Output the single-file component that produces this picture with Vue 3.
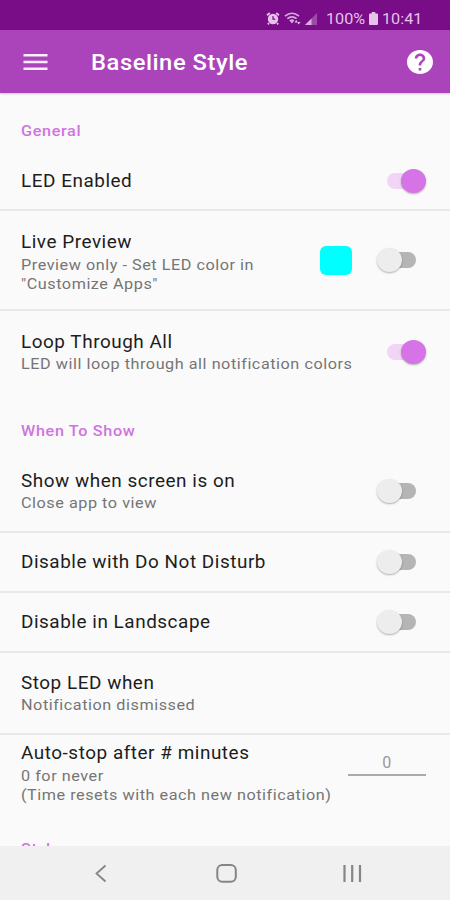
<script setup>
const general = [
  { title: 'LED Enabled', on: true, size: 'short first' },
  { title: 'Live Preview', lines: ['Preview only - Set LED color in', '"Customize Apps"'], on: false, swatch: true, size: 'tall' },
  { title: 'Loop Through All', lines: ['LED will loop through all notification colors'], on: true, size: 'medium last' },
]
const whenToShow = [
  { title: 'Show when screen is on', lines: ['Close app to view'], on: false, size: 'medium' },
  { title: 'Disable with Do Not Disturb', on: false, size: 'short' },
  { title: 'Disable in Landscape', on: false, size: 'short' },
  { title: 'Stop LED when', lines: ['Notification dismissed'], size: 'medium' },
  { title: 'Auto-stop after # minutes', lines: ['0 for never', '(Time resets with each new notification)'], input: '0', size: 'compact last' },
]
const sections = [
  { name: 'General', rows: general },
  { name: 'When To Show', rows: whenToShow },
  { name: 'Style', rows: [] },
]
</script>

<template>
  <div class="screen">
    <div class="status">
      <svg class="alarm" width="14" height="13" viewBox="0 0 14 13">
        <path d="M1 3.2 3.8 1M13 3.2 10.2 1M3 11.2 1.8 12.4M11 11.2l1.2 1.2" stroke="#e6c3ea" stroke-width="1.8" fill="none" />
        <circle cx="7" cy="7" r="5.2" fill="#e6c3ea" />
        <path d="M7 4v3.2h2.3" stroke="#780d87" stroke-width="1.2" fill="none" />
      </svg>
      <svg class="wifi" width="17" height="13" viewBox="0 0 17 13">
        <path d="M1 4.1Q8 -1.5 15 4.1M3.3 6.7Q8 3 12.6 6.7" stroke="#d9addf" stroke-width="1.6" fill="none" />
        <path d="M5.3 8.3Q8 6.2 10.4 8.3L8 11.5Z" fill="#d9addf" />
        <path d="M10.5 10.5 12.2 8l1.7 2.5ZM13 10l1.6 2.5L16.5 10Z" fill="#e6c3ea" />
      </svg>
      <svg class="signal" width="13" height="12" viewBox="0 0 13 12">
        <path d="M0 12 12 0v12Z" fill="#9b4ba6" />
        <path d="M0 12 6.5 5.5V12Z" fill="#d9addf" />
      </svg>
      <span class="percent"><span class="stretch">100%</span></span>
      <svg class="battery" width="9" height="13" viewBox="0 0 9 13">
        <path d="M2.7 0h3.6v1.5H8q1 0 1 1V12q0 1-1 1H1q-1 0-1-1V2.500q0-1 1-1h1.700Z" fill="#e6c3ea" />
      </svg>
      <span class="clock"><span class="stretch">10:41</span></span>
    </div>

    <header class="bar">
      <svg class="menu" width="25" height="18" viewBox="0 0 25 18">
        <path d="M.5 2.200h24M.5 9h24M.5 15.700h24" stroke="#fbeefd" stroke-width="2.500" />
      </svg>
      <h1><span class="stretch">Baseline Style</span></h1>
      <svg class="help" width="26" height="24" viewBox="2 2 20 20" preserveAspectRatio="none">
        <path fill="#fff" d="M12 2C6.480 2 2 6.480 2 12s4.480 10 10 10 10-4.480 10-10S17.520 2 12 2zm1 17h-2v-2h2v2zm2.070-7.750-.9.920C13.450 12.900 13 13.500 13 15h-2v-.5c0-1.100.45-2.100 1.170-2.830l1.240-1.260c.37-.36.59-.86.59-1.410 0-1.100-.9-2-2-2s-2 .9-2 2H8c0-2.210 1.790-4 4-4s4 1.790 4 4c0 .88-.36 1.680-.93 2.250z" />
      </svg>
    </header>

    <main>
      <section v-for="s in sections" :key="s.name">
        <h2><span class="stretch">{{ s.name }}</span></h2>
        <div v-for="r in s.rows" :key="r.title" class="row" :class="r.size">
          <div class="copy">
            <div class="title"><span class="stretch">{{ r.title }}</span></div>
            <div v-for="l in r.lines" :key="l" class="sub"><span class="stretch">{{ l }}</span></div>
          </div>
          <div v-if="r.swatch" class="swatch"></div>
          <div v-if="r.on !== undefined" class="switch" :class="{ on: r.on }"><i></i></div>
          <div v-if="r.input" class="field">{{ r.input }}</div>
        </div>
      </section>
    </main>

    <nav>
      <svg width="450" height="54" viewBox="0 0 450 54" fill="none" stroke="#858585">
        <path d="M105.500 19.500 96.500 27.500l9 8" stroke-width="1.800" />
        <rect x="217.300" y="19" width="18.500" height="16.800" rx="5" stroke-width="2" />
        <path d="M344.500 19v17M352.200 19v17M360 19v17" stroke-width="2.200" />
      </svg>
    </nav>
  </div>
</template>

<style>
body { margin: 0; }
</style>

<style scoped>
.screen { width: 450px; height: 900px; overflow: hidden; display: flex; flex-direction: column; background: #fafafa; font-family: Roboto, "Liberation Sans", sans-serif; }
.stretch { display: inline-block; white-space: nowrap; transform: scaleX(1.08); transform-origin: left center; }
.status { height: 30px; flex: none; box-sizing: border-box; padding: 7px 0 0 266px; background: #780d87; display: flex; align-items: center; color: #e6c3ea; font-size: 15px; }
.wifi { margin-left: 4px; }
.signal { margin-left: 4px; }
.percent { margin-left: 8px; width: 43px; }
.clock { margin-left: 4px; }
.bar { height: 63px; flex: none; box-sizing: border-box; background: #ab44bb; display: flex; align-items: center; padding: 0 17px 0 23px; position: relative; z-index: 1; box-shadow: 0 1px 2px rgba(0, 0, 0, .2); }
h1 { flex: 1; margin: 2px 0 0 43px; color: #fff; font-size: 22px; line-height: 30px; font-weight: 500; letter-spacing: .5px; }
main { flex: 1; min-height: 0; overflow: hidden; letter-spacing: .5px; }
h2 { margin: 0; height: 58px; box-sizing: border-box; padding: 28px 0 0 21px; font-size: 15px; line-height: 20px; font-weight: 500; letter-spacing: .6px; color: #d074e0; }
.row { box-sizing: border-box; display: flex; align-items: center; padding: 0 24px 0 21px; border-bottom: 2px solid #e8e8e8; }
.copy { flex: 1; }
.short { height: 60px; }
.first { padding-top: 2px; }
.tall { height: 100px; }
.tall .copy { padding-top: 4px; }
.medium { height: 82px; }
.compact { height: 76px; }
.last { border-bottom: 0; }
.title { font-size: 17.500px; line-height: 24px; color: #1d1d1d; }
.title + .sub { margin-top: 1.500px; }
.sub { font-size: 15px; line-height: 19px; color: #757575; }
.swatch { width: 32px; height: 29px; border-radius: 6px; background: #0ff; margin-right: 24px; }
.switch { width: 50px; height: 26px; position: relative; }
.switch::before { content: ""; position: absolute; left: 14px; top: 5px; width: 26px; height: 16px; border-radius: 8px; background: #b5b5b5; }
.switch i { position: absolute; left: 1px; top: 1px; width: 25px; height: 24px; border-radius: 50%; background: #ededed; box-shadow: 0 1px 2px rgba(0, 0, 0, .3); }
.switch.on::before { left: 11px; background: #f0d5f5; }
.switch.on i { left: 25px; background: #d673e6; }
.field { align-self: flex-start; margin-top: 15px; width: 78px; height: 24px; border-bottom: 2px solid #aaa; text-align: center; font-size: 16px; line-height: 25px; color: #999; }
nav { height: 54px; flex: none; background: #f0f0f0; }
nav svg { display: block; }
</style>
